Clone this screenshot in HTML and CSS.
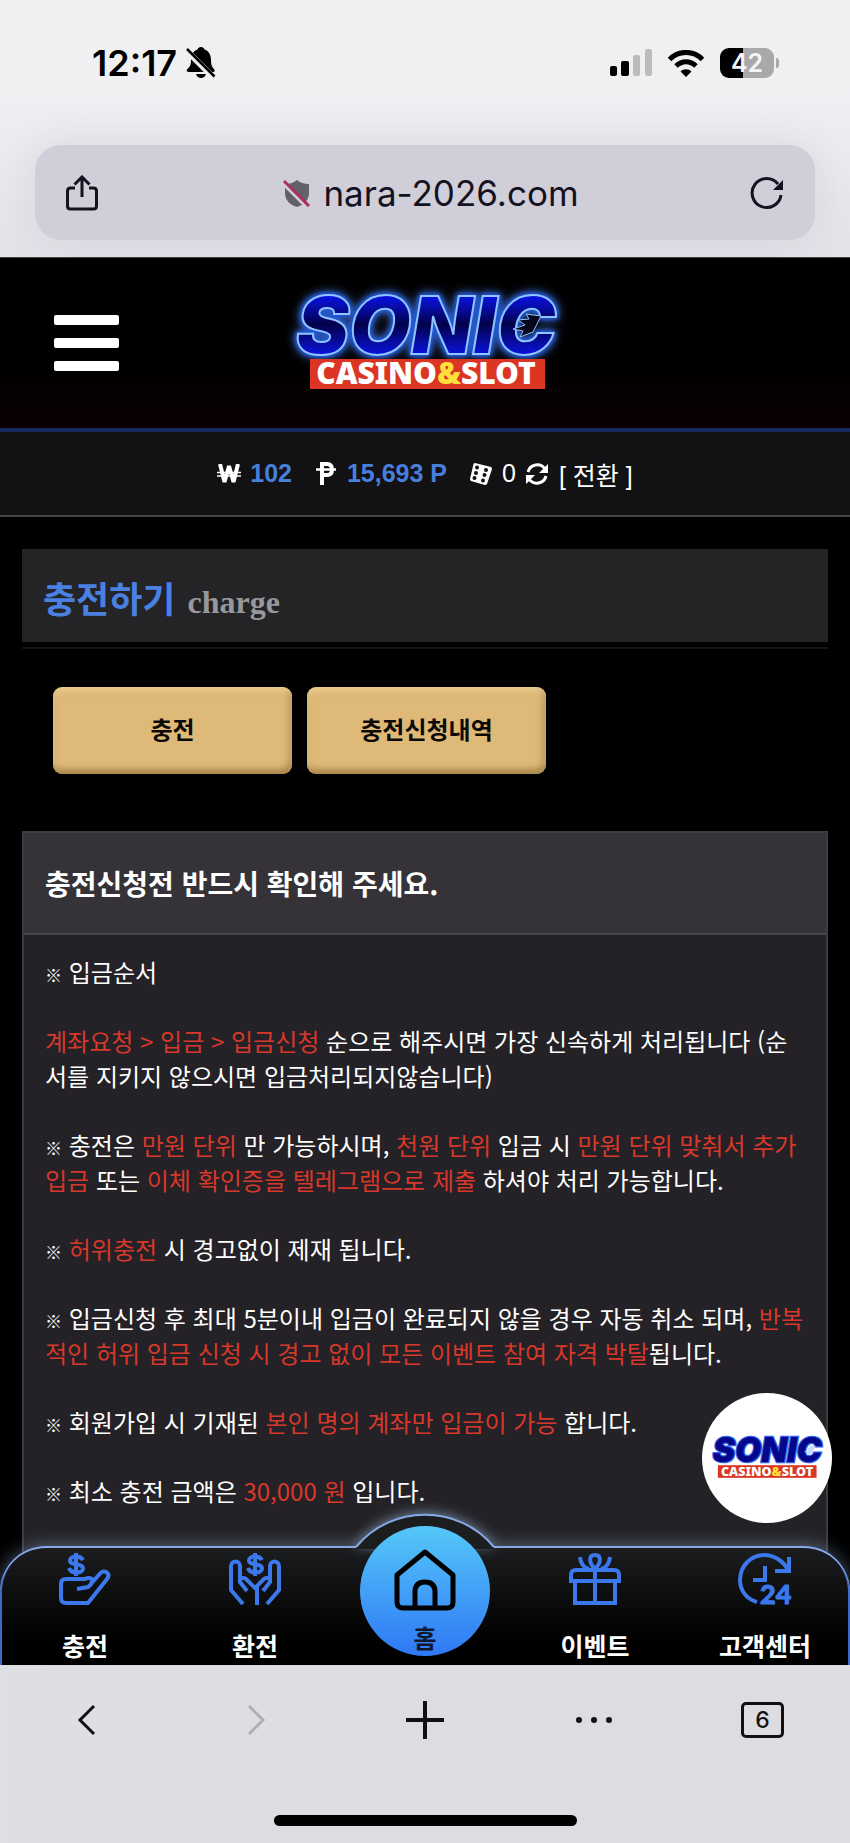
FILE: index.html
```html
<!DOCTYPE html>
<html lang="ko">
<head>
    <meta charset="UTF-8">
    <meta name="viewport" content="width=device-width, initial-scale=1.0">
    <title>충전하기</title>
    <link rel="stylesheet" href="styles.css">
</head>
<body>
    <div class="browser-top">
        <div class="status-bar">
            <div class="status-left">
                <span class="time">12:17</span>
                <svg width="30" height="32" viewBox="0 0 30 32">
                    <path d="M15 0C17 0 18 1 18.500 2.500C23 4 25 8 25 13C25 18 26 20 28 22C29 23.500 29 25 27 25H3C1 25 0 24 1 22.500C4 19.500 5 18 5 13C5 8 7 4 11.500 2.500C12 1 13 0 15 0ZM10 27H20C19 30 17 31 15 31C13 31 11 30 10 27Z"/>
                    <path d="M0 3L28 31" stroke="#f0eff2" stroke-width="6"/>
                    <path d="M1 2L28.500 29.500" stroke="#000" stroke-width="2.500"/>
                </svg>
            </div>
            <div class="status-right">
                <svg width="42" height="28" viewBox="0 0 42 28">
                    <rect x="0" y="17" width="7" height="10" rx="2"/>
                    <rect x="11" y="12" width="8" height="15" rx="2"/>
                    <rect x="23" y="6" width="7" height="21" rx="2" fill="#bcbbbd"/>
                    <rect x="35" y="0" width="7" height="27" rx="2" fill="#bcbbbd"/>
                </svg>
                <svg width="36" height="27" viewBox="0 0 36 27" fill="none" stroke="#000" stroke-width="5">
                    <path d="M1.500 9.500C10.500 0 25.500 0 34.500 9.500"/>
                    <path d="M8 16C14 10.300 22 10.300 28 16"/>
                    <path d="M18 27L12.500 21.500C15.500 18.600 20.500 18.600 23.500 21.500Z" fill="#000" stroke="none"/>
                </svg>
                <div class="battery"><span>42</span></div>
            </div>
        </div>
        <div class="url-bar">
            <button class="icon-btn" aria-label="공유">
                <svg width="32" height="36" viewBox="0 0 32 36" fill="none" stroke="#15121f" stroke-width="3">
                    <path d="M9 13H4.500Q1.500 13 1.500 16V31Q1.500 34 4.500 34H27.500Q30.500 34 30.500 31V16Q30.500 13 27.500 13H23"/>
                    <path d="M16 22V2.500M8.500 9.500L16 2L23.500 9.500"/>
                </svg>
            </button>
            <div class="address">
                <svg width="28" height="28" viewBox="0 0 28 28">
                    <path d="M14 1C17 3.500 21 5 26 5V14C26 21 21 26 14 28C7 26 2 21 2 14V5C7 5 11 3.500 14 1Z" fill="#626069"/>
                    <path d="M0 4L25 29" stroke="#d0ced9" stroke-width="4"/>
                    <path d="M1 2L26 27" stroke="#ab2f5d" stroke-width="3"/>
                </svg>
                <span>nara-2026.com</span>
            </div>
            <button class="icon-btn" aria-label="새로고침">
                <svg width="34" height="34" viewBox="0 0 34 34" fill="none" stroke="#15121f" stroke-width="3">
                    <path d="M31 19A14.500 14.500 0 1 1 28 8"/>
                    <path d="M33 4V14H23Z" fill="#15121f" stroke="none"/>
                </svg>
            </button>
        </div>
    </div>

    <div class="site">
        <header class="header">
            <button class="menu-btn" aria-label="메뉴">
                <span></span>
                <span></span>
                <span></span>
            </button>
            <a href="#" class="logo">
                <svg width="300" height="140" viewBox="0 -20 300 140">
                    <defs>
                        <linearGradient id="sonicFill" x1="0" y1="0" x2="0" y2="1">
                            <stop offset="0.2" stop-color="#0a12e6"/>
                            <stop offset="0.5" stop-color="#02024a"/>
                            <stop offset="0.8" stop-color="#0a12d8"/>
                        </linearGradient>
                    </defs>
                    <text class="sonic sonic-big" x="151" y="61">SONIC</text>
                    <path d="M266 23L251 21L254 26L243 27L250 32L238 36L248 38L245 44L258 39Z" fill="#06061c" stroke="#8fc4ff"/>
                    <rect x="35" y="66" width="235" height="30" fill="#db3524"/>
                    <text class="casino" x="151" y="91">CASINO<tspan class="amp">&amp;</tspan>SLOT</text>
                </svg>
            </a>
        </header>

        <div class="wallet">
            <svg width="24" height="20" viewBox="0 0 24 20" fill="none" stroke="#fff">
                <path d="M3 0L7.500 18L12 2L16.500 18L21 0" stroke-width="4" stroke-linejoin="bevel"/>
                <path d="M0 8.500H24M0 12H24" stroke-width="1.500"/>
            </svg>
            <b class="won">102</b>
            <svg width="20" height="23" viewBox="0 0 20 23" fill="none" stroke="#fff">
                <path d="M6 23V2H11Q16 2 16 7.500Q16 13 11 13H6" stroke-width="4"/>
                <path d="M0 7.500H20" stroke-width="2.500"/>
            </svg>
            <b class="point">15,693 P</b>
            <svg width="24" height="24" viewBox="0 0 24 24" fill="#fff">
                <path d="M6 1L22 5Q23 5.500 23 7L18 22Q17.500 23 16 23L2 19Q1 18.500 1 17L4.500 2Q5 1 6 1Z"/>
                <g fill="#121114">
                    <circle cx="8" cy="5.500" r="2"/><circle cx="17" cy="8" r="2"/>
                    <circle cx="7" cy="11" r="2"/><circle cx="15.500" cy="13" r="2"/>
                    <circle cx="5.500" cy="16" r="2"/><circle cx="14" cy="18.500" r="2"/>
                </g>
            </svg>
            <span class="count">0</span>
            <a href="#" class="convert">
                <svg width="24" height="24" viewBox="0 0 24 24" fill="none" stroke="#fff" stroke-width="3">
                    <path d="M3 10A9.500 9.500 0 0 1 20 7M21 14A9.500 9.500 0 0 1 4 17"/>
                    <path d="M23 2V11H14ZM1 22V13H10Z" fill="#fff" stroke="none"/>
                </svg>
                <span>[ 전환 ]</span>
            </a>
        </div>

        <main class="content">
            <div class="page-title">
                <h1>충전하기 <small>charge</small></h1>
            </div>

            <div class="tabs">
                <button>충전</button>
                <button>충전신청내역</button>
            </div>

            <section class="notice">
                <h2>충전신청전 반드시 확인해 주세요.</h2>
                <div class="notice-body">
                    <p><i>※</i> 입금순서</p>
                    <p><em>계좌요청 &gt; 입금 &gt; 입금신청</em> 순으로 해주시면 가장 신속하게 처리됩니다 (순서를 지키지 않으시면 입금처리되지않습니다)</p>
                    <p><i>※</i> 충전은 <em>만원 단위</em> 만 가능하시며, <em>천원 단위</em> 입금 시 <em>만원 단위 맞춰서 추가입금</em> 또는 <em>이체 확인증을 텔레그램으로 제출</em> 하셔야 처리 가능합니다.</p>
                    <p><i>※</i> <em>허위충전</em> 시 경고없이 제재 됩니다.</p>
                    <p><i>※</i> 입금신청 후 최대 5분이내 입금이 완료되지 않을 경우 자동 취소 되며, <em>반복적인 허위 입금 신청 시 경고 없이 모든 이벤트 참여 자격 박탈</em>됩니다.</p>
                    <p><i>※</i> 회원가입 시 기재된 <em>본인 명의 계좌만 입금이 가능</em> 합니다.</p>
                    <p><i>※</i> 최소 충전 금액은 <em>30,000 원</em> 입니다.</p>
                </div>
            </section>
        </main>

        <a href="#" class="float-logo">
            <svg width="126" height="59" viewBox="0 -20 300 140">
                <text class="sonic sonic-small" x="151" y="59">SONIC</text>
                <path d="M266 20L250 19L254 24L243 25L250 30L238 34L248 36L245 42L258 37Z" fill="#c9d8ff"/>
                <rect x="33" y="66" width="235" height="30" fill="#db3524"/>
                <text class="casino" x="150" y="91">CASINO<tspan class="amp">&amp;</tspan>SLOT</text>
            </svg>
        </a>

        <nav class="bottom-nav">
            <svg class="hump" width="200" height="60" viewBox="0 0 200 60">
                <path d="M31 60V58C66 15 134 15 169 58V60Z" fill="#1c1d1f"/>
                <path d="M31 58C66 15 134 15 169 58" fill="none" stroke="#86a9e6" stroke-width="2"/>
            </svg>
            <a href="#">
                <svg width="52" height="52" viewBox="0 0 52 52" fill="none" stroke="#3b78ec" stroke-width="4">
                    <path d="M24 7C21 2 11 2.500 11 7.500C11 13 24 9.500 24 15.500C24 21 12 21 10 15M17 0V23" />
                    <path d="M18 36L29 34Q34 31 33 26Q30 24 26 26H7Q2 26 2 31V45Q2 50 7 50H29L48 26Q51 22 48 19.500Q44 17 41 20.500L31 32"/>
                </svg>
                <span>충전</span>
            </a>
            <a href="#">
                <svg width="52" height="52" viewBox="0 0 52 52" fill="none" stroke="#3b78ec" stroke-width="4">
                    <path d="M33 7C30 2 20 2.500 20 7.500C20 13 33 9.500 33 15.500C33 21 21 21 19 15M26 0V23"/>
                    <path d="M14 51L2 37V13C2 7 11 7 11 13V29L18 38M11 25Q16 24 19 28L26 35L33 28Q36 24 41 25M38 51L50 37V13C50 7 41 7 41 13V29L34 38M28 33V52"/>
                </svg>
                <span>환전</span>
            </a>
            <a href="#" class="home">
                <svg width="62" height="62" viewBox="0 0 62 62" fill="none" stroke="#000" stroke-width="5" stroke-linejoin="round">
                    <path d="M31 3L59 26V53Q59 59 53 59H9Q3 59 3 53V26Z"/>
                    <path d="M21 58V43Q21 33 31 33Q41 33 41 43V58"/>
                </svg>
                <span>홈</span>
            </a>
            <a href="#">
                <svg width="52" height="52" viewBox="0 0 52 52" fill="none" stroke="#3b78ec" stroke-width="4">
                    <path d="M2 28V22Q2 17 7 17H45Q50 17 50 22V28ZM6 28V50H46V28M26 17V50"/>
                    <path d="M26 16C19 9 20 2 26 2C32 2 33 9 26 16ZM11 4Q12 14 20 16M41 4Q40 14 32 16"/>
                </svg>
                <span>이벤트</span>
            </a>
            <a href="#">
                <svg width="54" height="52" viewBox="0 0 54 52" fill="none" stroke="#3b78ec" stroke-width="4">
                    <path d="M19 49C8 46 2 37 2 27C2 13 13 2 26 2C37 2 46 9 50 17"/>
                    <path d="M51 4V18H37M27 13V27H15"/>
                    <text class="num24" x="22" y="51">24</text>
                </svg>
                <span>고객센터</span>
            </a>
        </nav>
    </div>

    <div class="browser-bottom">
        <div class="toolbar">
            <button aria-label="뒤로">
                <svg width="20" height="34" viewBox="0 0 20 34" fill="none" stroke="#111" stroke-width="3"><path d="M17 3L3 17L17 31"/></svg>
            </button>
            <button aria-label="앞으로">
                <svg width="20" height="34" viewBox="0 0 20 34" fill="none" stroke="#b0aeb3" stroke-width="3"><path d="M3 3L17 17L3 31"/></svg>
            </button>
            <button aria-label="새 탭">
                <svg width="38" height="38" viewBox="0 0 38 38" stroke="#111" stroke-width="4"><path d="M19 0V38M0 19H38"/></svg>
            </button>
            <button aria-label="더보기">
                <svg width="38" height="8" viewBox="0 0 38 8" fill="#111"><circle cx="4" cy="4" r="3"/><circle cx="19" cy="4" r="3"/><circle cx="34" cy="4" r="3"/></svg>
            </button>
            <button aria-label="탭 목록"><span class="tab-count">6</span></button>
        </div>
        <div class="home-indicator"></div>
    </div>
</body>
</html>
```
FILE: styles.css
```css
* {
    margin: 0;
    padding: 0;
    box-sizing: border-box;
}

body {
    display: flex;
    flex-direction: column;
    min-height: 100vh;
    font-family: "Liberation Sans", "Noto Sans CJK KR", sans-serif;
    font-size: 25px;
    background: #000;
    color: #fff;
}

button {
    border: none;
    background: none;
    font: inherit;
    cursor: pointer;
}

a {
    color: inherit;
    text-decoration: none;
}

svg {
    display: block;
    flex: none;
}

/* 브라우저 상단 */
.browser-top {
    padding: 40px 35px 17px;
    background: linear-gradient(#f0f0f0, #f0eff2 35%, #e4e2e9);
    font-family: Inter, sans-serif;
    color: #000;
}

.status-bar {
    display: flex;
    justify-content: space-between;
    height: 46px;
    padding: 0 41px 0 57px;
    margin-bottom: 59px;
}

.status-left,
.status-right {
    display: flex;
    align-items: center;
}

.status-left {
    gap: 9px;
}

.status-right {
    gap: 16px;
}

.time {
    font-size: 36px;
    font-weight: 600;
}

.battery {
    position: relative;
    width: 54px;
    height: 30px;
    border-radius: 9px;
    background: linear-gradient(90deg, #000 42%, #a9a8aa 42%);
    color: #f4f4f4;
    font-size: 25px;
    font-weight: 600;
    line-height: 30px;
    text-align: center;
}

.battery::after {
    content: "";
    position: absolute;
    right: -5px;
    top: 10px;
    width: 3px;
    height: 10px;
    border-radius: 0 4px 4px 0;
    background: #a9a8aa;
}

.url-bar {
    display: flex;
    align-items: center;
    justify-content: space-between;
    height: 95px;
    padding: 0 31px;
    border-radius: 26px;
    background: #d0ced8;
    box-shadow: 0 0 40px rgba(90, 80, 110, 0.12);
}

.address {
    display: flex;
    align-items: center;
    gap: 12px;
    padding-left: 14px;
    color: #15121f;
    font-size: 35px;
}

/* 헤더 */
.site {
    position: relative;
    flex: 1;
    display: flex;
    flex-direction: column;
    overflow: hidden;
    background: #000;
}

.header {
    display: grid;
    grid-template-columns: 1fr auto 1fr;
    align-items: center;
    height: 175px;
    padding: 0 54px;
    border-top: 1px solid #444;
    border-bottom: 4px solid #182a60;
    background: linear-gradient(#000 60%, #0a0003);
}

.menu-btn {
    display: flex;
    flex-direction: column;
    gap: 13px;
    width: 65px;
}

.menu-btn span {
    height: 10px;
    border-radius: 2px;
    background: #fff;
}

.sonic {
    font-family: Inter, sans-serif;
    font-size: 80px;
    font-weight: 900;
    font-style: italic;
    text-anchor: middle;
}

.sonic-big {
    fill: url(#sonicFill);
    stroke: #8fc4ff;
    stroke-width: 2;
    filter: drop-shadow(0 0 2px #1c55dc) drop-shadow(0 0 2px #1c55dc) drop-shadow(0 0 5px #3f68c0);
}

.sonic-small {
    fill: #05068a;
    stroke: #2f63ee;
    stroke-width: 6;
    paint-order: stroke;
}

.casino {
    fill: #fff;
    font-family: "Noto Sans", sans-serif;
    font-size: 30px;
    font-weight: 900;
    text-anchor: middle;
}

.amp {
    fill: #ffdf3a;
}

/* 보유금액 */
.wallet {
    display: flex;
    align-items: center;
    justify-content: center;
    height: 85px;
    border-bottom: 2px solid #444346;
    background: #121114;
}

.wallet b {
    color: #477fdc;
}

.won {
    margin: 0 24px 0 9px;
}

.point {
    margin: 0 22px 0 11px;
}

.count {
    margin: 0 9px;
}

.convert {
    display: flex;
    align-items: center;
    gap: 10px;
}

/* 본문 */
.content {
    flex: 1;
    display: flex;
    flex-direction: column;
    padding: 32px 22px 0;
    font-family: "Noto Sans CJK KR", sans-serif;
}

.page-title {
    border-bottom: 2px solid #151517;
    padding-bottom: 5px;
}

.page-title h1 {
    display: flex;
    align-items: baseline;
    gap: 12px;
    height: 93px;
    padding-left: 21px;
    background: #242326;
    color: #4a80e2;
    font-size: 36px;
    line-height: 96px;
}

.page-title small {
    color: #98989b;
    font-family: "Liberation Serif", serif;
    font-size: 32px;
}

.tabs {
    display: flex;
    gap: 15px;
    padding: 38px 31px 57px;
}

.tabs button {
    width: 239px;
    height: 87px;
    padding-bottom: 4px;
    border-radius: 9px;
    background: #dfb978;
    box-shadow: inset 0 3px 6px rgba(255, 235, 180, 0.5), inset -2px -4px 7px rgba(90, 60, 10, 0.5);
    font-size: 24px;
    font-weight: bold;
    color: #0c0a06;
}

.notice {
    flex: 1;
    border: 2px solid #3e3d41;
    background: #242226;
}

.notice h2 {
    height: 102px;
    padding-left: 21px;
    border-bottom: 2px solid #464549;
    background: #353337;
    font-size: 28px;
    line-height: 100px;
}

.notice-body {
    padding: 19px 20px 0 21px;
    font-size: 24px;
    line-height: 35px;
    word-break: break-all;
}

.notice-body p {
    margin-bottom: 34px;
}

.notice-body i {
    font-size: 17px;
    font-style: normal;
    font-weight: bold;
    line-height: 1;
}

.notice-body em {
    color: #d8382a;
    font-style: normal;
}

.float-logo {
    position: absolute;
    right: 18px;
    bottom: 142px;
    display: flex;
    align-items: center;
    justify-content: center;
    width: 130px;
    height: 130px;
    border-radius: 50%;
    background: #fff;
}

.logo svg,
.float-logo svg {
    overflow: visible;
}

/* 하단 메뉴 */
.bottom-nav {
    position: absolute;
    left: 0;
    right: 0;
    bottom: 0;
    display: grid;
    grid-template-columns: repeat(5, 1fr);
    height: 119px;
    padding-top: 2px;
    border-radius: 46px 46px 0 0;
    background: linear-gradient(#1c1d1f, #000 80%);
    box-shadow: inset 0 2px #86a9e6, inset 2px 0 #3f69c8, inset -2px 0 #3f69c8, 0 0 18px rgba(150, 180, 220, 0.5);
}

.bottom-nav a {
    position: relative;
    display: flex;
    flex-direction: column;
    align-items: center;
    padding-top: 5px;
    font-weight: bold;
}

.bottom-nav a span {
    margin-top: 24px;
    line-height: 36px;
}

.hump {
    position: absolute;
    left: 50%;
    top: -57px;
    margin-left: -100px;
    filter: drop-shadow(0 -2px 6px rgba(150, 180, 220, 0.6));
}

.bottom-nav .home {
    justify-self: center;
    width: 130px;
    height: 130px;
    margin-top: -22px;
    padding-top: 23px;
    border-radius: 50%;
    background: linear-gradient(#55c8f8, #2f78f5);
    color: #10182c;
}

.bottom-nav .home span {
    margin-top: 10px;
}

.num24 {
    fill: #3b78ec;
    stroke: #3b78ec;
    stroke-width: 1;
    font-family: Lato, sans-serif;
    font-size: 27px;
    font-weight: 900;
}

/* 브라우저 하단 */
.browser-bottom {
    display: flex;
    flex-direction: column;
    align-items: center;
    justify-content: space-between;
    height: 178px;
    padding: 30px 0 17px;
    background: linear-gradient(90deg, #dedfe3, #dedbe1 50%);
}

.toolbar {
    display: grid;
    grid-template-columns: repeat(5, 1fr);
    width: 100%;
    height: 50px;
    padding: 0 3px;
}

.toolbar button {
    display: flex;
    align-items: center;
    justify-content: center;
}

.tab-count {
    width: 43px;
    height: 36px;
    border: 3px solid #111;
    border-radius: 5px;
    color: #111;
    font-family: Inter, sans-serif;
    font-size: 23px;
    font-weight: 500;
    line-height: 30px;
}

.home-indicator {
    width: 303px;
    height: 11px;
    border-radius: 6px;
    background: #000;
}
```
